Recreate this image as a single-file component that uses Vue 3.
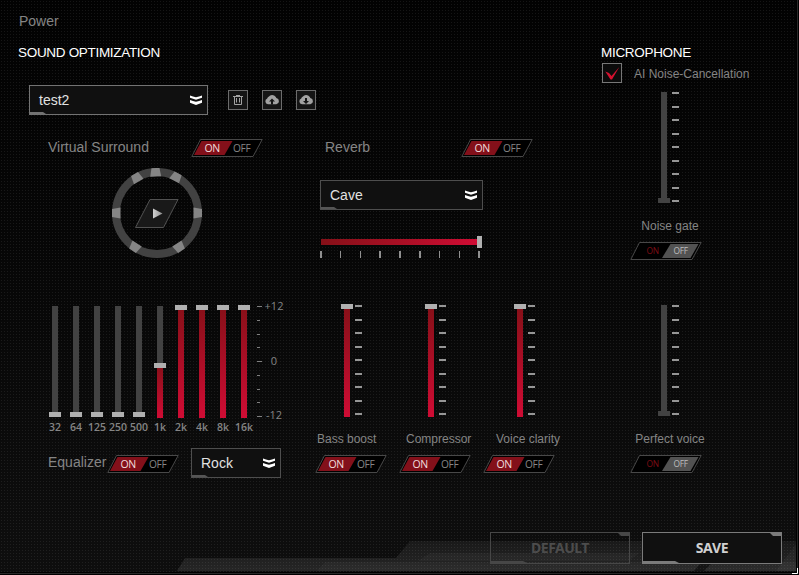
<template>
  <div class="panel">
    <svg class="backdrop" width="799" height="575">
      <defs>
        <linearGradient id="shade" x1="0" y1="0" x2="0" y2="1">
          <stop offset="0" stop-color="#020202" />
          <stop offset="0.5" stop-color="#070707" />
          <stop offset="1" stop-color="#0e0e0e" />
        </linearGradient>
        <linearGradient id="arrow" x1="0" y1="0" x2="1" y2="0">
          <stop offset="0" stop-color="#d0d0d0" />
          <stop offset="1" stop-color="#909090" />
        </linearGradient>
        <linearGradient id="strip" x1="0" y1="0" x2="0" y2="1">
          <stop offset="0" stop-color="#fff" stop-opacity="0.05" />
          <stop offset="1" stop-color="#fff" stop-opacity="0.1" />
        </linearGradient>
        <pattern id="dots" width="3" height="3" patternUnits="userSpaceOnUse">
          <rect x="1" y="1" width="1" height="1" fill="#fff" fill-opacity="0.075" />
        </pattern>
        <symbol id="toggle-on" viewBox="0 0 72 18">
          <path d="M9.500 .5H71.200L62 17.500H.8Z" fill="#000" stroke="#484848" />
          <path d="M10.500 2H41.500L33.500 16H3Z" fill="#83101a" />
          <text x="13.500" y="13" class="toggle-text lit">ON</text>
          <text x="42" y="13" class="toggle-text">OFF</text>
        </symbol>
        <symbol id="toggle-off" viewBox="0 0 72 18">
          <path d="M9.500 .5H71.200L62 17.500H.8Z" fill="#000" stroke="#484848" />
          <path d="M40.500 2H68.500L60.500 16H32Z" fill="#525252" />
          <text x="16.500" y="12" class="toggle-text small dim">ON</text>
          <text x="43.500" y="12" class="toggle-text small bright">OFF</text>
        </symbol>
        <symbol id="chevrons" viewBox="0 0 12 10">
          <path d="M0 .5L3 1.500L6 2.300L9 1.500L12 .5V2.800L6 4.700L0 2.800Z" fill="#fff" />
          <path d="M0 5L3 6L6 6.800L9 6L12 5V7.800L6 10L0 7.800Z" fill="#fff" />
        </symbol>
      </defs>
      <rect width="799" height="575" fill="url(#shade)" />
      <path d="M185 558H396L410 541H799V571H177Z" fill="url(#strip)" />
      <path d="M325 562H799V571H317Z" fill="#fff" fill-opacity="0.03" />
      <path d="M430 553H640L628 561H418Z" fill="#fff" fill-opacity="0.03" />
      <path d="M700 564H711L704 571H694Z" fill="#000" fill-opacity="0.5" />
      <path d="M796 544V571H776Z" fill="#fff" fill-opacity="0.04" />
      <rect width="799" height="575" fill="url(#dots)" />
      <path d="M796.500 0V572.500H0" fill="none" stroke="#000" />
      <path d="M797.500 0V573.500H0" fill="none" stroke="#292929" />
      <path d="M798.500 0V574.500H0" fill="none" stroke="#000" />
      <path d="M797.500 568V573.500H792" fill="none" stroke="#fff" />
    </svg>

    <div class="power">Power</div>
    <div class="content">
      <section class="sound">
        <h2>SOUND OPTIMIZATION</h2>
        <div class="preset-row">
          <div class="select preset">
            <span>test2</span>
            <svg class="chevrons"><use href="#chevrons" /></svg>
          </div>
          <div class="icon-btn">
            <svg width="20" height="20" fill="none" stroke="#a2a2a2">
              <path d="M5 6.500H15M8 5.500H12M6.500 7V14.500H13.500V7M8.500 8V12.500M11.500 8V12.500" />
            </svg>
          </div>
          <div v-for="dir in ['up', 'down']" :key="dir" class="icon-btn">
            <svg width="20" height="20">
              <path d="M6 14.300A3.100 3.100 0 0 1 5.200 8.400A3 3 0 0 1 7 6.600A4.300 4.300 0 0 1 14.300 8A3.200 3.200 0 0 1 14.300 14.300Z" fill="#a2a2a2" />
              <path v-if="dir === 'up'" d="M10 8.500L13 11.500H11V14.500H9V11.500H7Z" fill="#161616" />
              <path v-else d="M9 8H11V11H13L10 14L7 11H9Z" fill="#161616" />
            </svg>
          </div>
        </div>

        <div class="effects">
          <div class="surround">
            <div class="row-head">
              <span>Virtual Surround</span>
              <svg class="toggle"><use href="#toggle-on" /></svg>
            </div>
            <svg class="ring" width="90" height="90">
              <circle cx="45" cy="45" r="41" fill="none" stroke="#424242" stroke-width="8" />
              <path
                v-for="angle in speakers"
                :key="angle"
                :transform="`rotate(${angle} 45 45)`"
                d="M41 0H49L50.500 8.500H39.500Z"
                fill="#858585"
              />
              <path d="M38 31.500H66L51.500 59.500H23.500Z" fill="#191919" stroke="#525252" />
              <path d="M41 40.500L50.500 45.500L41 50.500Z" fill="url(#arrow)" />
            </svg>
          </div>
          <div class="reverb">
            <div class="row-head">
              <span>Reverb</span>
              <svg class="toggle"><use href="#toggle-on" /></svg>
            </div>
            <div class="select cave">
              <span>Cave</span>
              <svg class="chevrons"><use href="#chevrons" /></svg>
            </div>
            <div class="h-slider">
              <div class="h-bar"></div>
              <div class="h-thumb"></div>
            </div>
            <div class="h-ticks">
              <i v-for="n in 9" :key="n"></i>
            </div>
          </div>
        </div>

        <div class="mixer">
          <div class="equalizer">
            <div class="bands">
              <div v-for="band in bands" :key="band.name" class="band">
                <div class="track" :class="{ low: band.top > 100 }">
                  <div class="fill" :style="{ height: 113 - band.top + 'px' }"></div>
                  <div class="thumb" :style="{ top: band.top + 'px' }"></div>
                </div>
                <span>{{ band.name }}</span>
              </div>
              <div class="scale">
                <i v-for="n in 9" :key="n" :class="{ long: n % 4 === 1 }"></i>
              </div>
              <div class="scale-text">
                <span>+12</span>
                <span>0</span>
                <span>-12</span>
              </div>
            </div>
            <div class="eq-foot">
              <span class="eq-name">Equalizer</span>
              <svg class="toggle"><use href="#toggle-on" /></svg>
              <div class="select rock">
                <span>Rock</span>
                <svg class="chevrons"><use href="#chevrons" /></svg>
              </div>
            </div>
          </div>
          <div class="boosts">
            <div v-for="boost in boosts" :key="boost.name" class="boost" :class="boost.cls">
              <div class="level">
                <div class="track full">
                  <div class="fill"></div>
                  <div class="thumb"></div>
                </div>
                <div class="ticks"><i v-for="n in 9" :key="n"></i></div>
              </div>
              <div class="caption">{{ boost.name }}</div>
              <svg class="toggle"><use href="#toggle-on" /></svg>
            </div>
          </div>
        </div>
      </section>

      <section class="mic">
        <h2>MICROPHONE</h2>
        <div class="ai">
          <svg width="20" height="20">
            <rect x=".5" y=".5" width="19" height="19" fill="#0b0b0b" stroke="#777" />
            <path d="M3.300 8.500L7 10L9.500 13L17.300 4L10 16.500H8.500Z" fill="#d4112f" />
          </svg>
          <span>AI Noise-Cancellation</span>
        </div>
        <div v-for="mic in mics" :key="mic" class="mic-level">
          <div class="level">
            <div class="track off">
              <div class="thumb"></div>
            </div>
            <div class="ticks"><i v-for="n in 9" :key="n"></i></div>
          </div>
          <div class="caption">{{ mic }}</div>
          <svg class="toggle"><use href="#toggle-off" /></svg>
        </div>
      </section>
    </div>

    <div class="footer">
      <div class="btn default">DEFAULT</div>
      <div class="btn save">SAVE</div>
    </div>
  </div>
</template>

<script setup>
import { ref } from "vue";

const speakers = [-30, -2, 28, 90, 147, 213, 270];

// top = thumb position in px, 0 is +12
const bands = ref([
  { name: "32", top: 107 },
  { name: "64", top: 107 },
  { name: "125", top: 107 },
  { name: "250", top: 107 },
  { name: "500", top: 107 },
  { name: "1k", top: 58 },
  { name: "2k", top: 0 },
  { name: "4k", top: 0 },
  { name: "8k", top: 0 },
  { name: "16k", top: 0 },
]);

const boosts = [
  { name: "Bass boost", cls: "bass" },
  { name: "Compressor", cls: "comp" },
  { name: "Voice clarity", cls: "voice" },
];

const mics = ["Noise gate", "Perfect voice"];
</script>

<style>
body {
  background: #000;
}
</style>

<style scoped>
.panel {
  position: relative;
  width: 799px;
  height: 575px;
  overflow: hidden;
  font-family: "Liberation Sans", Arial, sans-serif;
  font-size: 14px;
  color: #858585;
  display: flex;
  flex-direction: column;
}
.panel * {
  box-sizing: border-box;
}
.backdrop {
  position: absolute;
  top: 0;
  left: 0;
  z-index: -1;
}
svg {
  display: block;
  flex-shrink: 0;
}
.power {
  margin: 12px 0 14px 19px;
  line-height: 18px;
}
.content {
  display: flex;
  height: 488px;
}
.sound {
  width: 601px;
}
h2 {
  margin: 0;
  padding-top: 1px;
  height: 16px;
  font-size: 13.5px;
  letter-spacing: -0.31px;
  font-weight: 400;
  line-height: 15px;
  color: #fff;
}
.sound h2 {
  margin-left: 18px;
}

/* selects */
.select {
  position: relative;
  height: 30px;
  padding: 0 6px 0 9px;
  border: 1px solid #4e4e4e;
  background: #101010;
  color: #e2e2e2;
  display: flex;
  align-items: center;
  justify-content: space-between;
}
.select::before {
  content: "";
  position: absolute;
  left: 0;
  bottom: 0;
  width: 16px;
  height: 2px;
  background: #555;
  clip-path: polygon(0 0, 13px 0, 100% 100%, 0 100%);
}
.chevrons {
  width: 12px;
  height: 10px;
}
.preset-row {
  display: flex;
  align-items: center;
  gap: 14px;
  margin: 25px 0 0 29px;
}
.preset {
  width: 179px;
  margin-right: 6px;
  border-color: #737373;
  padding-right: 5px;
}
.preset::before {
  background: #737373;
}
.icon-btn {
  width: 20px;
  height: 20px;
  background: #151515;
  box-shadow: inset 0 0 0 1px #6c6c6c;
}
.toggle {
  width: 72px;
  height: 18px;
}
.toggle-text {
  font-family: "Open Sans", "Noto Sans", sans-serif;
  font-size: 10.2px;
  letter-spacing: -0.3px;
  fill: #858585;
}
.lit {
  font-size: 10.5px;
  fill: #f2dede;
}
.small {
  font-size: 8.4px;
  letter-spacing: -0.3px;
}
.dim {
  fill: #7e0d15;
}
.bright {
  fill: #bdbdbd;
}

/* surround + reverb */
.effects {
  display: flex;
  height: 165px;
  margin-top: 24px;
}
.surround {
  width: 320px;
}
.row-head {
  display: flex;
  justify-content: space-between;
  line-height: 16px;
}
.surround .row-head {
  width: 215px;
  margin-left: 48px;
}
.ring {
  margin: 11px 0 0 112px;
}
.reverb {
  width: 213px;
}
.reverb .row-head {
  padding-left: 5px;
}
.cave {
  width: 163px;
  margin-top: 23px;
  padding-right: 5px;
}
.h-slider {
  display: flex;
  align-items: center;
  height: 12px;
  margin-top: 26px;
}
.h-bar {
  width: 156px;
  height: 6px;
  margin-left: 0.5px;
  background: linear-gradient(90deg, #861018, #a80f24 50%, #cf0c34);
}
.h-thumb {
  width: 5px;
  height: 12px;
  background: #b0b0b0;
}
.h-ticks {
  display: flex;
  justify-content: space-between;
  width: 160px;
  margin-top: 3px;
}
.h-ticks i {
  width: 1.6px;
  height: 7px;
  background: #909090;
}

/* vertical sliders */
.mixer {
  display: flex;
}
.equalizer {
  width: 315px;
}
.bands {
  display: flex;
  height: 144px;
  padding: 1px 0 0 44.5px;
}
.band {
  width: 21px;
  display: flex;
  flex-direction: column;
  align-items: center;
}
.band span {
  font: 600 10.5px/14px "Open Sans", "Noto Sans", sans-serif;
  margin-top: 2px;
}
.track {
  position: relative;
  width: 6px;
  height: 113px;
  background: linear-gradient(#424242, #424242) 0 1px no-repeat;
}
.fill {
  position: absolute;
  left: 0;
  bottom: 0;
  width: 6px;
  background: linear-gradient(#861018, #cf0c34);
}
.low .fill {
  display: none;
}
.low {
  clip-path: inset(0 -3px 1px -3px);
}
.thumb {
  position: absolute;
  left: -3px;
  width: 12px;
  height: 5px;
  background: #b0b0b0;
}
.scale {
  display: flex;
  flex-direction: column;
  justify-content: space-between;
  width: 7px;
  height: 112px;
  margin-left: 2.5px;
  padding-top: 1px;
}
.scale i {
  width: 3px;
  height: 1px;
  background: #808080;
}
.scale .long {
  width: 5px;
}
.scale-text {
  display: flex;
  flex-direction: column;
  justify-content: space-between;
  align-items: center;
  width: 20px;
  height: 123px;
  margin-top: -6px;
  font: 11px/14px "Open Sans", "Noto Sans", sans-serif;
}
.eq-foot {
  display: flex;
  align-items: center;
  padding-left: 48px;
}
.eq-name {
  width: 59px;
  line-height: 16px;
  margin-top: -2px;
}
.rock {
  width: 90px;
  margin-left: 12px;
  padding-right: 5px;
}
.eq-foot .toggle {
  margin-top: 2px;
}
.boosts {
  display: flex;
  gap: 12px;
}
.boost {
  width: 72px;
}
.level {
  display: flex;
  height: 113px;
}
.level .track {
  margin-left: 3px;
}
.full .fill {
  height: 111px;
}
.level .off {
  height: 111px;
  background: #424242;
}
.off .thumb {
  top: 106px;
  background: #424242;
}
.ticks {
  display: flex;
  flex-direction: column;
  justify-content: space-between;
  height: 110px;
  margin: 1px 0 0 5px;
}
.ticks i {
  width: 7px;
  height: 2px;
  background: #969696;
}
.caption {
  font-size: 12px;
  line-height: 14px;
  margin-top: 15px;
  white-space: nowrap;
}
.boost .toggle,
.mic-level .toggle {
  margin-top: 9px;
}
.bass .level,
.comp .level {
  padding-left: 26px;
}
.voice .level {
  padding-left: 31px;
}
.bass .caption {
  padding-left: 2px;
}
.comp .caption {
  padding-left: 7px;
}
.voice .caption {
  padding-left: 13px;
}

/* microphone */
.mic {
  width: 198px;
}
.ai {
  display: flex;
  align-items: center;
  gap: 12px;
  margin: 3px 0 0 1px;
  font-size: 12px;
}
.ai span {
  margin-top: 2px;
}
.mic-level {
  width: 80px;
  margin-left: 29px;
  padding-top: 9px;
}
.mic-level + .mic-level {
  padding-top: 45px;
}
.mic-level .level {
  padding-left: 28px;
}
.mic-level .ticks {
  margin-top: 0;
}
.mic-level .caption {
  text-align: center;
  margin-top: 14px;
}

/* footer buttons */
.footer {
  display: flex;
  justify-content: flex-end;
  gap: 12px;
  padding-right: 17px;
}
.btn {
  position: relative;
  width: 140px;
  height: 32px;
  border: 1px solid #474747;
  color: #4c4c4c;
  font: 700 14px/30px "Noto Sans", "Open Sans", sans-serif;
  letter-spacing: -0.5px;
  text-align: center;
}
.btn::before,
.btn::after {
  content: "";
  position: absolute;
  background: #474747;
}
.btn::before {
  left: 0;
  bottom: 0;
  width: 36px;
  height: 2px;
  clip-path: polygon(0 0, 32px 0, 100% 100%, 0 100%);
}
.btn::after {
  right: 0;
  top: 0;
  width: 11px;
  height: 3px;
  clip-path: polygon(0 0, 100% 0, 100% 100%, 3px 100%);
}
.save {
  border-color: #7b7b7b;
  background: #101010;
  color: #d0d0d0;
  letter-spacing: -0.3px;
}
.save::before,
.save::after {
  background: #7b7b7b;
}
</style>
